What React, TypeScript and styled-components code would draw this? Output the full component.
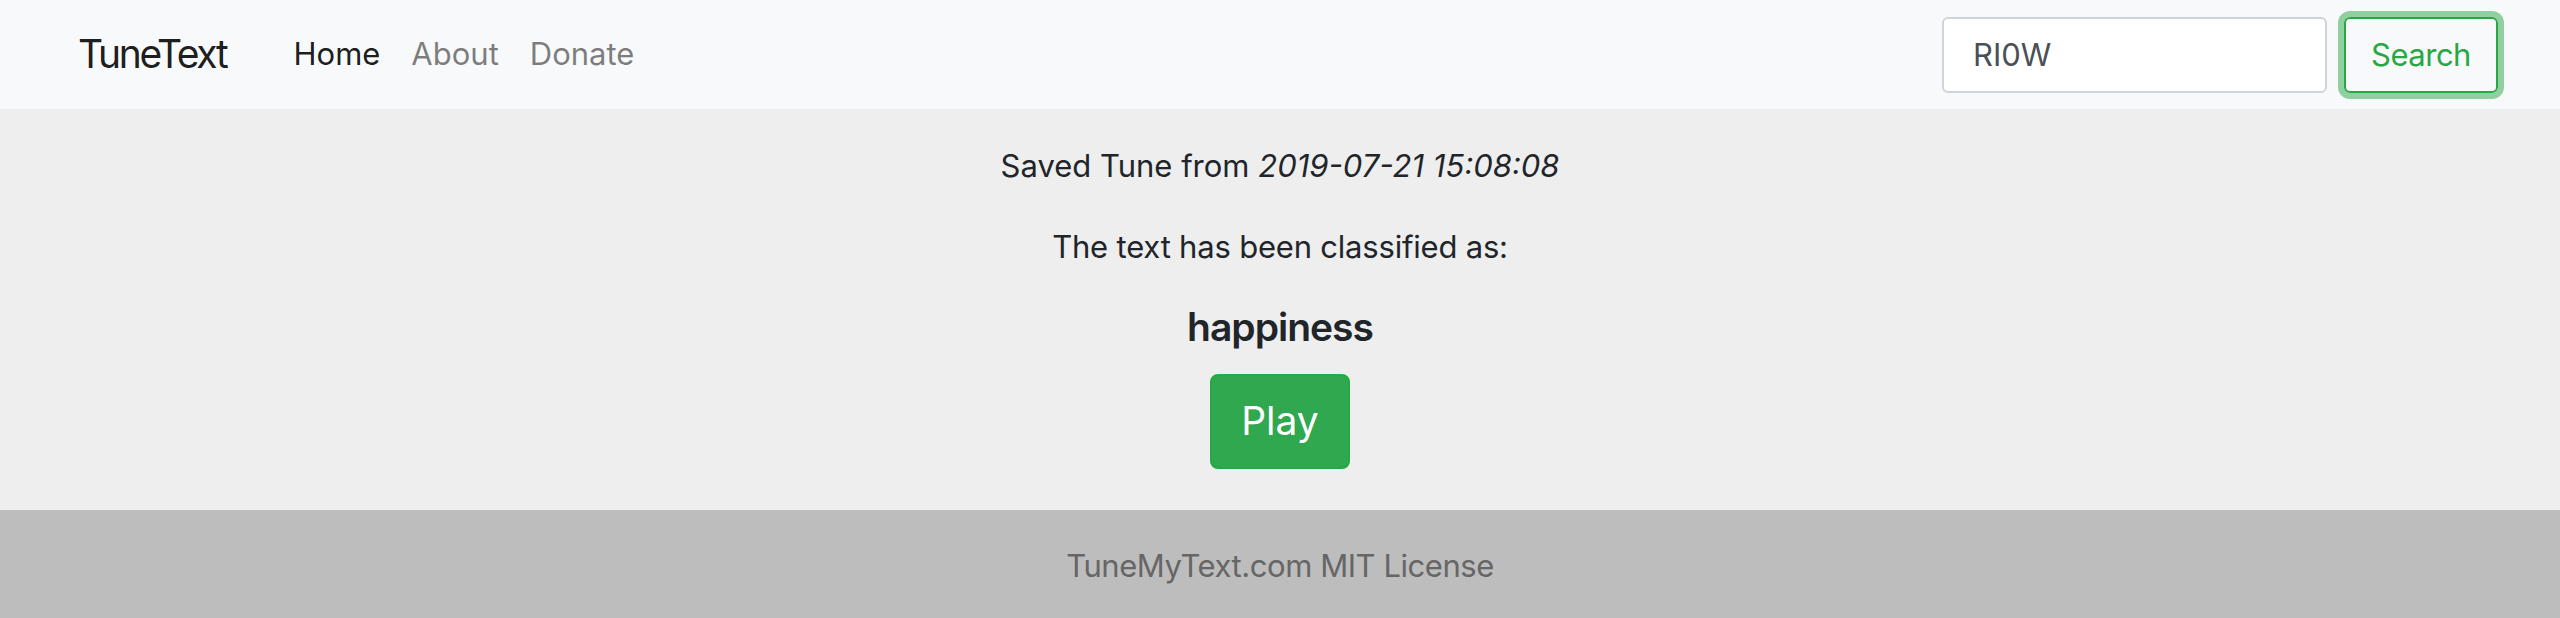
import React from "react";
import styled, { createGlobalStyle } from "styled-components";

const Global = createGlobalStyle`
  html, body { margin: 0; padding: 0; }
  body {
    font-family: Inter, Roboto, "Liberation Sans", Arial, sans-serif;
    color: #212529;
    background: #eeeeee;
    font-size: 31px;
    line-height: 1.5;
  }
  * { box-sizing: border-box; }
`;

const Page = styled.div`
  display: flex;
  flex-direction: column;
  min-height: 618px;
`;

const Navbar = styled.nav`
  height: 109px;
  background: #f8f9fa;
  display: flex;
  align-items: center;
  padding: 0 62px 0 78px;
`;

const Brand = styled.a`
  font-size: 39px;
  letter-spacing: -2.3px;
  color: rgba(0, 0, 0, 0.9);
  text-decoration: none;
  margin-right: 67px;
  line-height: 1.5;
`;

const NavList = styled.ul`
  list-style: none;
  margin: 0;
  padding: 0;
  display: flex;
  gap: 31px;
  flex: 1;
`;

const NavLink = styled.a<{ $active?: boolean }>`
  color: ${(p) => (p.$active ? "rgba(0,0,0,0.9)" : "rgba(0,0,0,0.5)")};
  text-decoration: none;
  font-size: 31px;
`;

const Form = styled.form`
  display: flex;
  align-items: center;
  gap: 17px;
`;

const Input = styled.input`
  width: 385px;
  height: 76px;
  border: 2px solid #ced4da;
  border-radius: 6px;
  padding: 0 29px;
  font-family: inherit;
  font-size: 31px;
  color: #495057;
  background: #fff;
  outline: none;
`;

const OutlineButton = styled.button`
  height: 76px;
  width: 154px;
  padding: 0;
  border: 2px solid #28a745;
  border-radius: 6px;
  background: transparent;
  color: #28a745;
  font-family: inherit;
  font-size: 31px;
  letter-spacing: -0.5px;
  box-shadow: 0 0 0 6px rgba(40, 167, 69, 0.5);
`;

const Main = styled.main`
  flex: 1;
  background: #eeeeee;
  padding-top: 34px;
  text-align: center;
  display: flex;
  flex-direction: column;
  align-items: center;
`;

const Para = styled.p<{ $tight?: boolean }>`
  margin: 0 0 34px;
  letter-spacing: ${(p) => (p.$tight ? "-0.2px" : "normal")};
`;

const Label = styled.h5`
  margin: 0 0 23px;
  font-size: 39px;
  font-weight: 600;
  letter-spacing: -1px;
  line-height: 1.2;
`;

const PlayButton = styled.button`
  height: 95px;
  width: 140px;
  padding: 0;
  border: 2px solid #28a745;
  border-radius: 8px;
  background: #2fa84f;
  color: #fff;
  font-family: inherit;
  font-size: 39px;
  line-height: 1.5;
`;

const Footer = styled.footer`
  height: 108px;
  padding-top: 4px;
  background: #bdbdbd;
  display: flex;
  align-items: center;
  justify-content: center;
  color: #666666;
  font-size: 31px;
  letter-spacing: -0.45px;
`;

export default function App() {
  return (
    <>
      <Global />
      <Page>
        <Navbar>
          <Brand href="#">TuneText</Brand>
          <NavList>
            <li><NavLink $active href="#">Home</NavLink></li>
            <li><NavLink href="#">About</NavLink></li>
            <li><NavLink href="#">Donate</NavLink></li>
          </NavList>
          <Form onSubmit={(e) => e.preventDefault()}>
            <Input defaultValue="RI0W" />
            <OutlineButton type="submit">Search</OutlineButton>
          </Form>
        </Navbar>
        <Main>
          <Para>
            Saved Tune from <em>2019-07-21 15:08:08</em>
          </Para>
          <Para $tight>The text has been classified as:</Para>
          <Label>happiness</Label>
          <PlayButton>Play</PlayButton>
        </Main>
        <Footer>TuneMyText.com MIT License</Footer>
      </Page>
    </>
  );
}
